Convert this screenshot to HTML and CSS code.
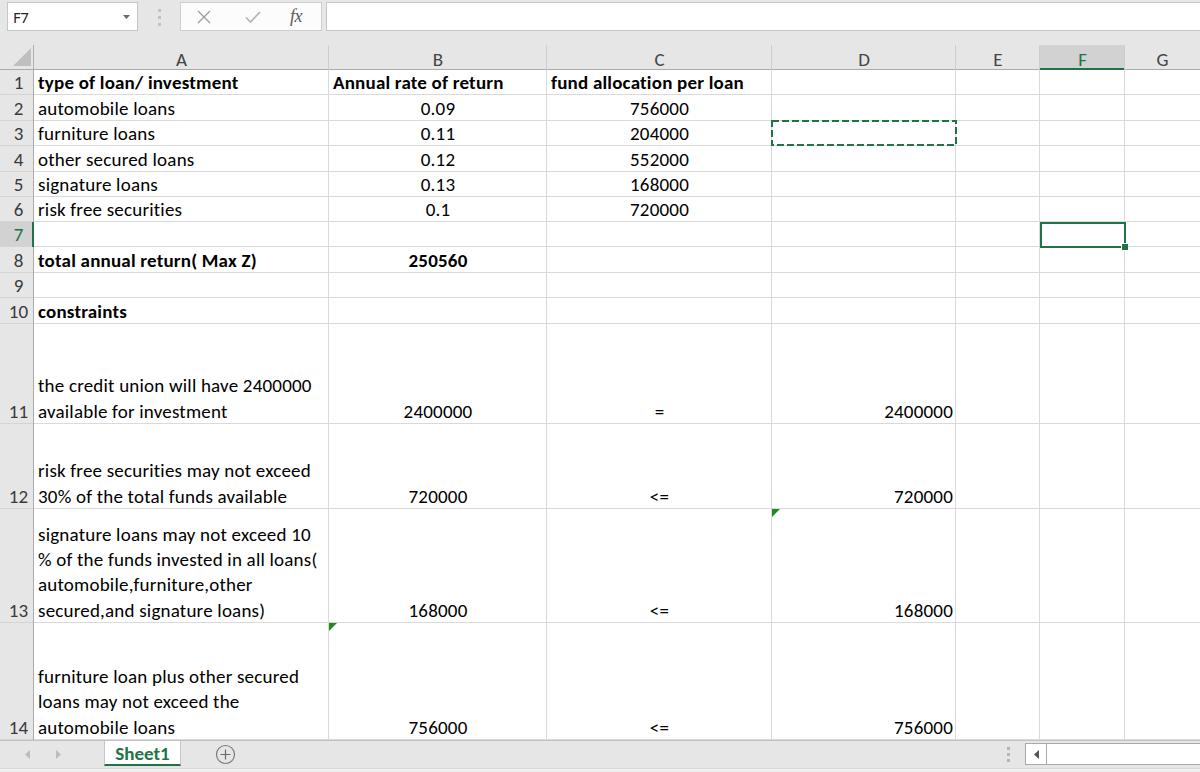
FILE: index.html
```html
<!DOCTYPE html>
<html>
<head>
<meta charset="utf-8">
<title>Sheet1</title>
<link rel="stylesheet" href="styles.css">
</head>
<body>
<div class="toolbar">
  <div class="namebox">
    <span>F7</span>
    <svg class="nb-arrow" width="7" height="4" viewBox="0 0 7 4"><path d="M0 0h7L3.5 4z" fill="#6a6a6a"/></svg>
  </div>
  <div class="grip">
    <svg width="3" height="20" viewBox="0 0 3 20"><rect x="0" y="0" width="3" height="3" fill="#c2c2c2"/><rect x="0" y="7" width="3" height="3" fill="#c2c2c2"/><rect x="0" y="14" width="3" height="3" fill="#c2c2c2"/></svg>
  </div>
  <div class="fbtns">
    <div class="fb fb-x"><svg width="16" height="16" viewBox="0 0 16 16"><path d="M2 2L14 14M14 2L2 14" stroke="#9c9c9c" stroke-width="1.3" fill="none"/></svg></div>
    <div class="fb fb-ok"><svg width="18" height="14" viewBox="0 0 18 14"><path d="M2 7.5L6.5 12L16 2" stroke="#b3b3b3" stroke-width="1.7" fill="none"/></svg></div>
    <div class="fb fb-fx"><span class="fx">fx</span></div>
  </div>
  <div class="finput"></div>
</div>

<div class="sheet">
  <div class="corner"><svg width="34" height="25" viewBox="0 0 34 25"><path d="M31 3V21H13z" fill="#bfbfbf"/></svg></div>
  <div class="ch">A</div><div class="ch">B</div><div class="ch">C</div><div class="ch">D</div><div class="ch">E</div><div class="ch sel">F</div><div class="ch last">G</div>

  <div class="rh">1</div><div class="c b">type of loan/ investment</div><div class="c b">Annual rate of return</div><div class="c b">fund allocation per loan</div><div class="c"></div><div class="c"></div><div class="c"></div><div class="c last"></div>

  <div class="rh">2</div><div class="c">automobile loans</div><div class="c ctr">0.09</div><div class="c ctr">756000</div><div class="c"></div><div class="c"></div><div class="c"></div><div class="c last"></div>

  <div class="rh">3</div><div class="c">furniture loans</div><div class="c ctr">0.11</div><div class="c ctr">204000</div><div class="c pos"><svg class="marquee" width="186" height="26" viewBox="0 0 186 26"><rect x="1" y="1" width="184" height="24" fill="none" stroke="#217346" stroke-width="2" stroke-dasharray="7 3"/></svg></div><div class="c"></div><div class="c"></div><div class="c last"></div>

  <div class="rh">4</div><div class="c">other secured loans</div><div class="c ctr">0.12</div><div class="c ctr">552000</div><div class="c"></div><div class="c"></div><div class="c"></div><div class="c last"></div>

  <div class="rh">5</div><div class="c">signature loans</div><div class="c ctr">0.13</div><div class="c ctr">168000</div><div class="c"></div><div class="c"></div><div class="c"></div><div class="c last"></div>

  <div class="rh">6</div><div class="c">risk free securities</div><div class="c ctr">0.1</div><div class="c ctr">720000</div><div class="c"></div><div class="c"></div><div class="c"></div><div class="c last"></div>

  <div class="rh sel">7</div><div class="c"></div><div class="c"></div><div class="c"></div><div class="c"></div><div class="c"></div><div class="c pos"><div class="active"></div><div class="handle"></div></div><div class="c last"></div>

  <div class="rh">8</div><div class="c b">total annual return( Max Z)</div><div class="c b ctr">250560</div><div class="c"></div><div class="c"></div><div class="c"></div><div class="c"></div><div class="c last"></div>

  <div class="rh">9</div><div class="c"></div><div class="c"></div><div class="c"></div><div class="c"></div><div class="c"></div><div class="c"></div><div class="c last"></div>

  <div class="rh">10</div><div class="c b">constraints</div><div class="c"></div><div class="c"></div><div class="c"></div><div class="c"></div><div class="c"></div><div class="c last"></div>

  <div class="rh">11</div><div class="c">the credit union will have 2400000<br>available for investment</div><div class="c ctr">2400000</div><div class="c ctr">=</div><div class="c rt">2400000</div><div class="c"></div><div class="c"></div><div class="c last"></div>

  <div class="rh">12</div><div class="c">risk free securities may not exceed<br>30% of the total funds available</div><div class="c ctr">720000</div><div class="c ctr">&lt;=</div><div class="c rt">720000</div><div class="c"></div><div class="c"></div><div class="c last"></div>

  <div class="rh">13</div><div class="c">signature loans may not exceed 10<br>% of the funds invested in all loans(<br>automobile,furniture,other<br>secured,and signature loans)</div><div class="c ctr">168000</div><div class="c ctr">&lt;=</div><div class="c rt err">168000</div><div class="c"></div><div class="c"></div><div class="c last"></div>

  <div class="rh">14</div><div class="c">furniture loan plus other secured<br>loans may not exceed the<br>automobile loans</div><div class="c ctr err">756000</div><div class="c ctr">&lt;=</div><div class="c rt">756000</div><div class="c"></div><div class="c"></div><div class="c last"></div>
</div>

<div class="tabbar">
  <div class="navs">
    <svg width="104" height="27" viewBox="0 0 104 27"><path d="M30 9V18L25 13.5z" fill="#bcbcbc"/><path d="M56 9V18L61 13.5z" fill="#bcbcbc"/></svg>
  </div>
  <div class="tab">Sheet1</div>
  <div class="addsheet">
    <svg width="21" height="21" viewBox="0 0 21 21"><circle cx="10.5" cy="10.5" r="9" fill="none" stroke="#7a7a7a" stroke-width="1.2"/><path d="M10.5 5.5V15.5M5.5 10.5H15.5" stroke="#6a6a6a" stroke-width="1.2"/></svg>
  </div>
  <div class="spacer"></div>
  <div class="tgrip">
    <svg width="3" height="16" viewBox="0 0 3 16"><rect x="0" y="0" width="3" height="3" fill="#b5b5b5"/><rect x="0" y="6" width="3" height="3" fill="#b5b5b5"/><rect x="0" y="12" width="3" height="3" fill="#b5b5b5"/></svg>
  </div>
  <div class="hscroll">
    <div class="hs-btn"><svg width="5" height="9" viewBox="0 0 5 9"><path d="M5 0V9L0 4.5z" fill="#555"/></svg></div>
    <div class="hs-track"></div>
  </div>
</div>
<div class="status"></div>
</body>
</html>
```

FILE: styles.css
```css
* { box-sizing: border-box; }
html, body { margin: 0; padding: 0; }
body {
  width: 1200px;
  height: 772px;
  overflow: hidden;
  background: #e6e6e6;
  font-family: Carlito, Lato, "Liberation Sans", sans-serif;
}

/* formula bar */
.toolbar {
  height: 45px;
  display: flex;
  align-items: flex-start;
  padding-top: 2px;
}
.namebox {
  margin-left: 7px;
  width: 131px;
  height: 29px;
  background: #fff;
  border: 1px solid #c6c6c6;
  display: flex;
  align-items: center;
  justify-content: space-between;
  padding: 0 7px 0 5px;
  font-family: "Noto Sans", "Open Sans", sans-serif;
  font-size: 14.5px;
  color: #222;
}
.grip {
  width: 42px;
  height: 29px;
  display: flex;
  justify-content: center;
  padding-top: 7px;
}
.fbtns {
  width: 142px;
  height: 29px;
  background: #fcfcfc;
  border: 1px solid #cfcfcf;
  margin-right: 4px;
  display: flex;
  align-items: center;
}
.fb { display: flex; justify-content: center; align-items: center; }
.fb-x { width: 45px; }
.fb-ok { width: 54px; }
.fb-fx { width: 32px; }
.fx {
  font-family: "Liberation Serif", serif;
  font-style: italic;
  font-size: 18px;
  color: #5a5a5a;
  letter-spacing: -0.5px;
}
.finput {
  flex: 1;
  height: 29px;
  background: #fff;
  border: 1px solid #c6c6c6;
  border-right: none;
}

/* grid */
.sheet {
  display: grid;
  grid-template-columns: 34px 295px 218px 225px 184px 84px 85px 75px;
  grid-template-rows: 25px 25px 26px 25px 26px 25px 25px 25px 26px 25px 26px 100px 85px 114px 117px;
  background: #fff;
  font-size: 19px;
  color: #000;
}
.corner {
  background: #e6e6e6;
  box-shadow: inset -1px 0 0 #b0b0b0, inset 0 -1px 0 #ababab;
}
.corner svg { display: block; }
.ch {
  background: #e6e6e6;
  box-shadow: inset -1px 0 0 #cdcdcd, inset 0 -1px 0 #ababab;
  display: flex;
  align-items: center;
  justify-content: center;
  padding-top: 3px;
  color: #444;
}
.ch.sel {
  background: #d2d2d2;
  color: #217346;
  box-shadow: inset -1px 0 0 #cdcdcd, inset 0 -2px 0 #217346;
}
.ch.last { box-shadow: inset 0 -1px 0 #ababab; }
.rh {
  background: #e6e6e6;
  box-shadow: inset -1px 0 0 #ababab, inset 0 -1px 0 #d4d4d4;
  display: flex;
  align-items: flex-end;
  justify-content: center;
  padding-left: 3px;
  line-height: 25px;
  color: #3a3a3a;
}
.rh.sel {
  background: #d2d2d2;
  color: #217346;
  box-shadow: inset -2px 0 0 #217346, inset 0 -1px 0 #d4d4d4;
}
.c {
  box-shadow: inset -1px 0 0 #dadada, inset 0 -1px 0 #dadada;
  display: flex;
  align-items: flex-end;
  line-height: 25.3px;
  padding: 0 4px;
  white-space: nowrap;
  letter-spacing: 0.2px;
}
.c.last { box-shadow: inset 0 -1px 0 #dadada; }
.b { font-weight: bold; }
.ctr { justify-content: center; }
.rt { justify-content: flex-end; padding-right: 3px; }
.pos { position: relative; }
.err { position: relative; }
.err::before {
  content: "";
  position: absolute;
  left: 0;
  top: 0;
  width: 0;
  height: 0;
  border-top: 8px solid #1f8c1f;
  border-right: 8px solid transparent;
}

/* overlays */
.marquee {
  position: absolute;
  left: -1px;
  top: -1px;
  display: block;
}
.active {
  position: absolute;
  left: 0;
  top: 0;
  right: -1px;
  bottom: -1px;
  border: 2px solid #217346;
}
.handle {
  position: absolute;
  left: 82px;
  top: 22px;
  width: 6px;
  height: 6px;
  background: #217346;
  box-shadow: 0 0 0 1px #fff;
}

/* sheet tabs */
.tabbar {
  height: 28px;
  border-top: 1px solid #c2c2c2;
  display: flex;
  align-items: flex-start;
  background: #e6e6e6;
}
.navs { width: 104px; height: 27px; }
.navs svg { display: block; }
.tab {
  width: 77px;
  height: 25px;
  background: #fff;
  border-left: 1px solid #c6c6c6;
  border-right: 1px solid #c6c6c6;
  border-bottom: 2px solid #217346;
  color: #217346;
  font-weight: bold;
  font-size: 19px;
  display: flex;
  align-items: center;
  justify-content: center;
  padding-top: 1px;
}
.addsheet {
  margin-left: 34px;
  margin-top: 3px;
  width: 21px;
  height: 21px;
}
.addsheet svg { display: block; }
.spacer { flex: 1; }
.tgrip {
  width: 17px;
  height: 27px;
  display: flex;
  justify-content: center;
  padding-top: 6px;
  margin-right: 8px;
}
.hscroll {
  width: 175px;
  height: 22px;
  margin-top: 2px;
  background: #fff;
  border: 1px solid #a9a9a9;
  border-right: none;
  display: flex;
}
.hs-btn {
  width: 21px;
  height: 100%;
  border-right: 1px solid #a9a9a9;
  display: flex;
  align-items: center;
  justify-content: center;
}
.hs-track { flex: 1; }
.status {
  height: 4px;
  background: #f0f0f0;
  border-top: 1px solid #d8d8d8;
}
```
